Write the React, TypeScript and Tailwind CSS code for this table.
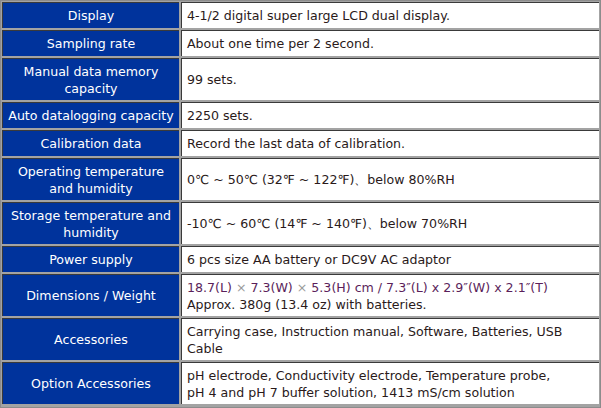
import React from 'react';

type Row = { label: React.ReactNode; value: React.ReactNode; h: 'one' | 'two' };

const rows: Row[] = [
  { label: 'Display', value: '4-1/2 digital super large LCD dual display.', h: 'one' },
  { label: 'Sampling rate', value: 'About one time per 2 second.', h: 'one' },
  { label: <>Manual data memory<br />capacity</>, value: '99 sets.', h: 'two' },
  { label: 'Auto datalogging capacity', value: '2250 sets.', h: 'one' },
  { label: 'Calibration data', value: 'Record the last data of calibration.', h: 'one' },
  { label: <>Operating temperature<br />and humidity</>, value: '0℃ ~ 50℃ (32℉ ~ 122℉)、below 80%RH', h: 'two' },
  { label: <>Storage temperature and<br />humidity</>, value: '-10℃ ~ 60℃ (14℉ ~ 140℉)、below 70%RH', h: 'two' },
  { label: 'Power supply', value: '6 pcs size AA battery or DC9V AC adaptor', h: 'one' },
  {
    label: 'Dimensions / Weight',
    value: (
      <>
        <span className="text-[#5b1f5b]">
          18.7(L) <span className="text-[#9a9a9a]">×</span> 7.3(W) <span className="text-[#9a9a9a]">×</span> 5.3(H) cm / 7.3″(L) x 2.9″(W) x 2.1″(T)
        </span>
        <br />
        Approx. 380g (13.4 oz) with batteries.
      </>
    ),
    h: 'two',
  },
  { label: 'Accessories', value: <>Carrying case, Instruction manual, Software, Batteries, USB<br />Cable</>, h: 'two' },
  {
    label: 'Option Accessories',
    value: <>pH electrode, Conductivity electrode, Temperature probe,<br />pH 4 and pH 7 buffer solution, 1413 mS/cm solution</>,
    h: 'two',
  },
];

export default function App() {
  return (
    <div className="w-[601px] h-[408px] bg-white font-['DejaVu_Sans',Verdana,sans-serif] text-[12.6px] leading-[17px]">
      <div className="border border-[#8c8c8c] bg-[#a3a3a3] p-px flex flex-col gap-[2px] h-full">
        {rows.map((r, i) => (
          <div key={i} className={`flex gap-[2px] ${r.h === 'one' ? 'h-[26px]' : 'h-[42px]'}`}>
            <div className="w-[177px] shrink-0 bg-[#00339c] border-t border-l border-[#3a3a3a] text-white flex items-center justify-center text-center">
              <div>{r.label}</div>
            </div>
            <div className="flex-1 bg-white border-t border-l border-[#3a3a3a] text-[#2a1a1a] flex items-center pl-[5px]">
              <div>{r.value}</div>
            </div>
          </div>
        ))}
      </div>
    </div>
  );
}
